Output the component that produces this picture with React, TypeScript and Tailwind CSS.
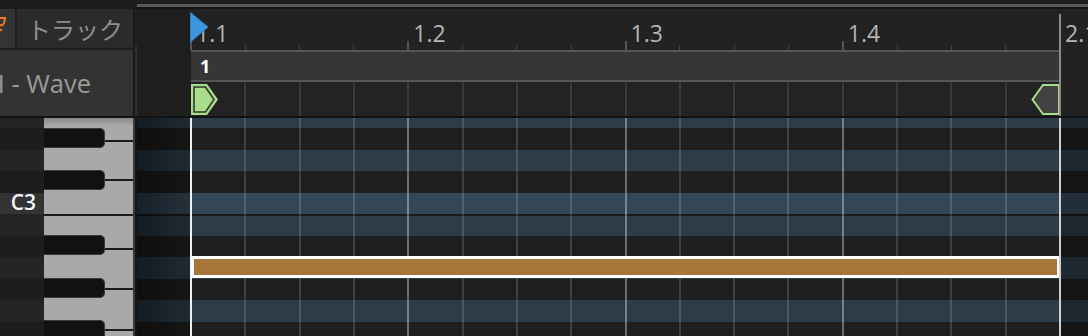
import React from "react";

const SIX = 217.25 / 4; // px per 16th
const CLIP_X = 54; // clip start inside timeline (abs x 191)
const CLIP_W = 869;

const ROWS: { h: number; black: boolean; label?: string; sepTop?: boolean; hi?: boolean }[] = [
  { h: 10, black: false },
  { h: 21.5, black: true },
  { h: 21.5, black: false },
  { h: 21.5, black: true },
  { h: 21.5, black: false, label: "C3", hi: true },
  { h: 21.5, black: false, sepTop: true },
  { h: 21.5, black: true },
  { h: 21.5, black: false },
  { h: 21.5, black: true },
  { h: 21.5, black: false },
  { h: 14.5, black: true },
];

const BLACK_KEYS = [10, 52, 117, 159.5, 202];
const KEY_LINES = [22, 60.5, 129.5, 170, 210.5];

function Ruler() {
  const ticks = Array.from({ length: 17 }, (_, k) => k);
  const labels = ["1.1", "1.2", "1.3", "1.4", "2.1"];
  return (
    <div className="relative flex flex-col h-[107px]">
      {/* ruler row */}
      <div className="flex h-[41px]">
        <div className="w-[54px] bg-[#1e1e1e]" />
        <div className="flex-1 bg-[#222222]" />
      </div>
      {/* clip bar */}
      <div className="flex h-[32px]">
        <div className="w-[54px] bg-[#1e1e1e]" />
        <div className="w-[869px] bg-[#363636] border-y-2 border-[#555555] flex items-center pl-[9px]">
          <span className="text-[18px] leading-[18px] font-bold text-white">1</span>
        </div>
        <div className="flex-1 bg-[#222222]" />
      </div>
      {/* marker row */}
      <div className="flex h-[34px]">
        <div className="w-[54px] bg-[#1e1e1e]" />
        <div className="relative w-[869px] bg-[#232323] flex items-center justify-between">
          {ticks.slice(1, 16).map((k) => (
            <div
              key={k}
              className="absolute top-0 bottom-0 w-[2px] bg-[#3a3a3a]"
              style={{ left: k * SIX - 1 }}
            />
          ))}
          <svg width="28" height="31" viewBox="0 0 28 31" className="relative">
            <polygon points="0,0 16,0 27,15.5 16,31 0,31" fill="#a9dc8b" />
            <polygon points="3,3 14.5,3 23,15.5 14.5,28 3,28" fill="none" stroke="#2f3a2a" strokeWidth="1.6" />
          </svg>
          <svg width="29" height="31" viewBox="0 0 29 31" className="relative">
            <polygon points="28,1 12,1 1.5,15.5 12,30 28,30" fill="#424242" stroke="#a9dc8b" strokeWidth="2" />
          </svg>
        </div>
        <div className="flex-1 bg-[#222222]" />
      </div>

      {/* ticks */}
      {ticks.map((k) =>
        k % 4 === 0 ? (
          <div
            key={"t" + k}
            className="absolute w-[2px] bg-[#555555] top-[32px] h-[9px]"
            style={{ left: CLIP_X + k * SIX - 1 }}
          />
        ) : (
          <div
            key={"t" + k}
            className="absolute w-px bg-[#474747] top-[36px] h-[5px]"
            style={{ left: CLIP_X + k * SIX - 0.5 }}
          />
        )
      )}
      {labels.map((l, i) => (
        <span
          key={l}
          className="absolute top-[13px] text-[23px] leading-[23px] text-[#b4b4b4] whitespace-nowrap"
          style={{ left: CLIP_X + i * 4 * SIX + 5 }}
        >
          {l}
        </span>
      ))}
      {/* clip end line */}
      <div className="absolute top-[5px] bottom-0 w-[2px] bg-[#8a8a8a]" style={{ left: CLIP_X + CLIP_W - 1.5 }} />
      {/* playhead */}
      <svg className="absolute left-[53px] top-[3px]" width="19" height="31" viewBox="0 0 19 31">
        <polygon points="0.5,0.5 18,15 0.5,30" fill="#3d95dd" stroke="#2f7fc4" strokeWidth="1" />
      </svg>
    </div>
  );
}

function Grid() {
  const lines = Array.from({ length: 15 }, (_, i) => i + 1);
  return (
    <div className="relative flex-1 flex flex-col overflow-hidden">
      {ROWS.map((r, i) => (
        <div
          key={i}
          className={
            (r.black ? "bg-[#1f1f1f]" : r.hi ? "bg-[#344757]" : "bg-[#2c3c48]") +
            (r.sepTop ? " border-t-2 border-[#1a1a1a]" : "")
          }
          style={{ height: r.h, flexShrink: 0 }}
        />
      ))}
      {/* darker outside clip */}
      <div className="absolute left-0 top-0 bottom-0 w-[54px] bg-gradient-to-r from-black/55 to-black/30" />
      <div className="absolute left-[924px] top-0 bottom-0 right-0 bg-black/33" />
      {/* vertical lines */}
      {lines.map((k) => (
        <div
          key={k}
          className={"absolute top-0 bottom-0 w-[2px] " + (k % 4 === 0 ? "bg-white/35" : "bg-white/15")}
          style={{ left: CLIP_X + k * SIX - 1 }}
        />
      ))}
      <div className="absolute top-0 bottom-0 left-[53px] w-[2px] bg-[#f0f0f0]" />
      <div className="absolute top-0 bottom-0 w-[2px] bg-[#cfcfcf]" style={{ left: CLIP_X + CLIP_W - 1.5 }} />
      {/* note */}
      <div className="absolute left-[54px] w-[868px] top-[138px] h-[22px] border-y-[3px] border-l-[3px] border-r-2 border-white bg-[#a9763a]" />
    </div>
  );
}

export default function App() {
  return (
    <div
      className="w-[1088px] h-[336px] overflow-hidden bg-[#1d1d1d] flex flex-col"
      style={{ fontFamily: '"Open Sans", "Noto Sans CJK JP", sans-serif' }}
    >
      {/* header */}
      <div className="flex h-[116px]">
        <div className="w-[133px] flex flex-col">
          <div className="h-[9px] bg-[#1d1d1d]" />
          <div className="h-[39px] flex">
            <div className="w-[15px] bg-[#343434] relative overflow-hidden">
              <svg width="15" height="39" viewBox="0 0 15 39" className="block">
                <path d="M-1 9 L5 9 L4 14 Q3 17 0 16" fill="none" stroke="#ef7a2a" strokeWidth="2" />
                <circle cx="1" cy="21" r="1.2" fill="#ef7a2a" />
              </svg>
            </div>
            <div className="w-[2px] bg-[#1e1e1e]" />
            <div
              className="flex-1 bg-[#2b2b2b] flex items-center justify-center text-[24px] leading-[24px] text-[#8e8e8e]"
              style={{ fontFamily: '"Noto Sans CJK JP", sans-serif' }}
            >
              トラック
            </div>
          </div>
          <div className="h-[2px] bg-[#1c1c1c]" />
          <div className="flex-1 bg-[#333333] flex items-center overflow-hidden">
            <span className="ml-[-14px] whitespace-nowrap text-[25.5px] leading-[25px] text-[#9a9a9a]">H - Wave</span>
          </div>
        </div>
        <div className="w-[2px] bg-[#1a1a1a]" />
        <div className="w-[2px] flex flex-col bg-[#1e1e1e]">
          <div className="h-[45px]" />
          <div className="flex-1 bg-[#2e2e2e]" />
        </div>
        <div className="flex-1 flex flex-col">
          <div className="h-[4px] bg-[#1d1d1d]" />
          <div className="h-[3px] bg-[#5a5a5a]" />
          <div className="h-[2px] bg-[#141414]" />
          <Ruler />
        </div>
      </div>
      <div className="h-[2px] bg-[#121212]" />
      {/* body */}
      <div className="flex flex-1 min-h-0">
        {/* labels */}
        <div className="w-[44px] flex flex-col overflow-hidden">
          {ROWS.map((r, i) => (
            <div
              key={i}
              className={
                "flex items-center justify-end pr-[8px] " +
                (r.hi ? "bg-[#333333]" : r.black ? "bg-[#1d1d1d]" : "bg-[#242424]")
              }
              style={{ height: r.h, flexShrink: 0 }}
            >
              {r.label && (
                <span className="text-[21px] leading-[21px] font-semibold text-[#f2f6fb] mb-[2px]">{r.label}</span>
              )}
            </div>
          ))}
        </div>
        {/* keyboard */}
        <div className="relative w-[89px] bg-[#a9a9a9] overflow-hidden">
          <div className="absolute inset-x-0 top-0 h-[8px] bg-gradient-to-b from-[#888888] to-transparent" />
          {KEY_LINES.map((y) => (
            <div key={y} className="absolute left-[60px] right-0 h-[2px] bg-[#1c1c1c]" style={{ top: y }} />
          ))}
          <div className="absolute left-0 right-0 top-[95.5px] h-[2px] bg-[#1c1c1c]" />
          {BLACK_KEYS.map((y) => (
            <div
              key={y}
              className="absolute left-0 w-[61px] h-[20px] bg-[#111111] rounded-r-[5px] border border-l-0 border-[#3a3a3a]"
              style={{ top: y }}
            />
          ))}
        </div>
        <div className="w-[2px] bg-[#3a3a3a]" />
        <div className="w-[2px] bg-[#151515]" />
        <Grid />
      </div>
    </div>
  );
}
